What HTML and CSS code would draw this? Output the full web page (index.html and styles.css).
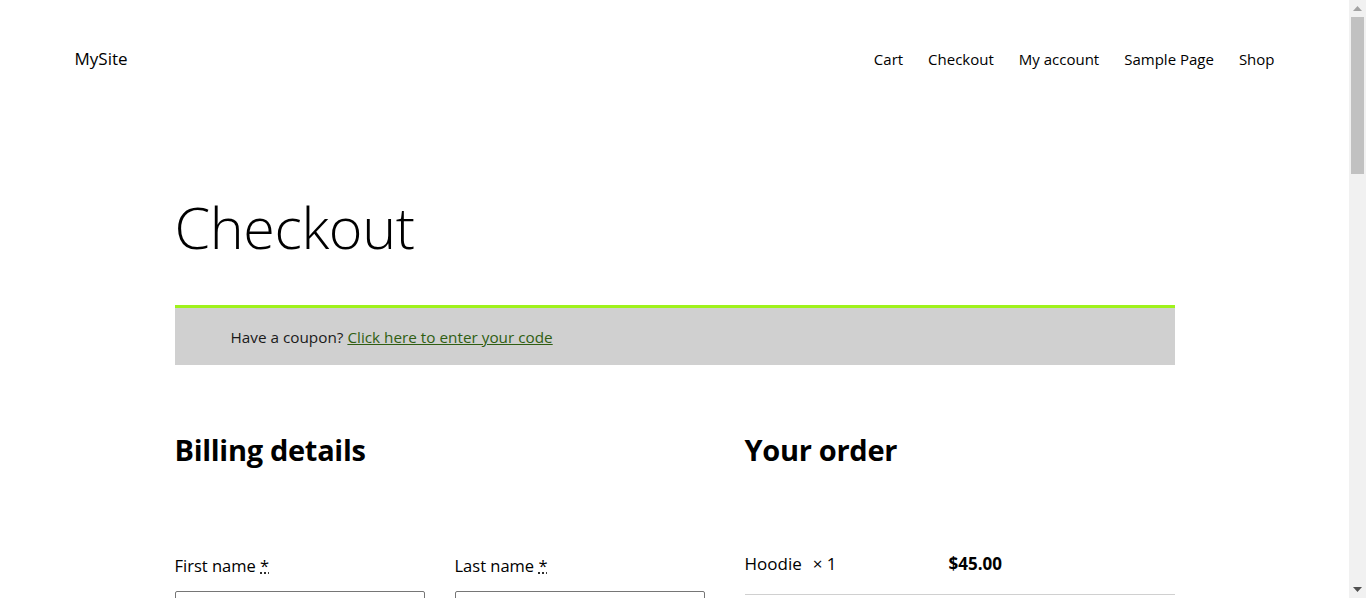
FILE: index.html
```html
<!DOCTYPE html>
<html lang="en">
<head>
<meta charset="utf-8">
<title>Checkout – MySite</title>
<link rel="stylesheet" href="styles.css">
</head>
<body>
<div class="viewport">
  <header class="site-header">
    <a class="site-title" href="#">MySite</a>
    <nav class="site-nav">
      <a href="#">Cart</a>
      <a href="#">Checkout</a>
      <a href="#">My account</a>
      <a href="#">Sample Page</a>
      <a href="#">Shop</a>
    </nav>
  </header>
  <main class="page">
    <h1 class="page-title">Checkout</h1>
    <div class="coupon">
      <span>Have a coupon? <a href="#" class="coupon-link">Click here to enter your code</a></span>
    </div>
    <div class="checkout">
      <section class="billing">
        <h2 class="section-title">Billing details</h2>
        <div class="fields">
          <div class="field">
            <label>First name <abbr class="req">*</abbr></label>
            <input type="text" class="input">
          </div>
          <div class="field">
            <label>Last name <abbr class="req">*</abbr></label>
            <input type="text" class="input">
          </div>
        </div>
      </section>
      <section class="order">
        <h2 class="section-title">Your order</h2>
        <div class="order-table">
          <div class="order-row">
            <span class="product">Hoodie<span class="qty">×&nbsp;1</span></span>
            <strong class="price">$45.00</strong>
          </div>
        </div>
      </section>
    </div>
  </main>
</div>
<div class="scrollbar" aria-hidden="true">
  <div class="sb-btn">
    <svg width="9" height="5" viewBox="0 0 9 5"><polygon points="0,5 4.5,0 9,5" fill="#a3a3a3"/></svg>
  </div>
  <div class="sb-track">
    <div class="sb-thumb"></div>
  </div>
  <div class="sb-btn">
    <svg width="9" height="5" viewBox="0 0 9 5"><polygon points="0,0 9,0 4.5,5" fill="#505050"/></svg>
  </div>
</div>
</body>
</html>
```
FILE: styles.css
```css
html, body {
  margin: 0;
  padding: 0;
}
body {
  font-family: "Open Sans", "Noto Sans", sans-serif;
  color: #000;
  background: #fff;
  font-size: 16px;
  overflow: hidden;
}
a {
  color: inherit;
  text-decoration: none;
}
.viewport {
  width: calc(100% - 17px);
  height: 100vh;
  overflow: hidden;
}
.scrollbar {
  position: fixed;
  top: 0;
  right: 0;
  width: 17px;
  height: 100vh;
  background: #f1f1f1;
  display: flex;
  flex-direction: column;
}
.sb-btn {
  height: 17px;
  display: flex;
  align-items: center;
  justify-content: center;
}
.sb-track {
  flex: 1;
  padding: 0 2px;
}
.sb-thumb {
  height: 157px;
  background: #c1c1c1;
}
.site-header {
  max-width: 1200px;
  margin: 0 auto;
  padding: 47px 0 0;
  display: flex;
  justify-content: space-between;
  align-items: center;
  height: 24px;
}
.site-title {
  font-size: 17px;
  line-height: 24px;
}
.site-nav {
  display: flex;
  gap: 25px;
  font-size: 15px;
  line-height: 24px;
}
.page {
  width: 1000px;
  margin: 0 auto;
  padding-top: 123px;
}
.page-title {
  font-size: 57.5px;
  font-weight: 300;
  line-height: 67px;
  margin: 0 0 44px;
  letter-spacing: -0.4px;
}
.coupon {
  border-top: 3px solid #9ff21c;
  background: #d0d0d0;
  height: 57px;
  padding: 0 56px;
  display: flex;
  align-items: center;
  font-size: 15.3px;
  color: #1a1a1a;
}
.coupon-link {
  color: #2f5e12;
  text-decoration: underline;
}
.checkout {
  display: grid;
  grid-template-columns: 530px 430px;
  column-gap: 40px;
  margin-top: 68px;
}
.section-title {
  font-size: 29px;
  font-weight: 700;
  line-height: 34px;
  margin: 0 0 87px;
  letter-spacing: -0.3px;
}
.fields {
  display: grid;
  grid-template-columns: 1fr 1fr;
  column-gap: 30px;
  row-gap: 20px;
}
.field {
  display: flex;
  flex-direction: column;
  gap: 13px;
}
.field label {
  font-size: 16.5px;
  line-height: 24px;
}
.req {
  text-decoration: underline dotted;
  border: none;
}
.input {
  box-sizing: border-box;
  height: 40px;
  border: 1px solid #767676;
  border-radius: 2px;
  font: inherit;
  padding: 0 8px;
  margin: 0;
}
.order-table {
  margin-top: -2px;
}
.order-row {
  display: grid;
  grid-template-columns: 204px 1fr;
  align-items: start;
  height: 42px;
  border-bottom: 1px solid #d0d0d0;
  font-size: 17px;
}
.qty {
  margin-left: 11px;
}
.price {
  font-weight: 700;
  font-size: 17px;
}
```
